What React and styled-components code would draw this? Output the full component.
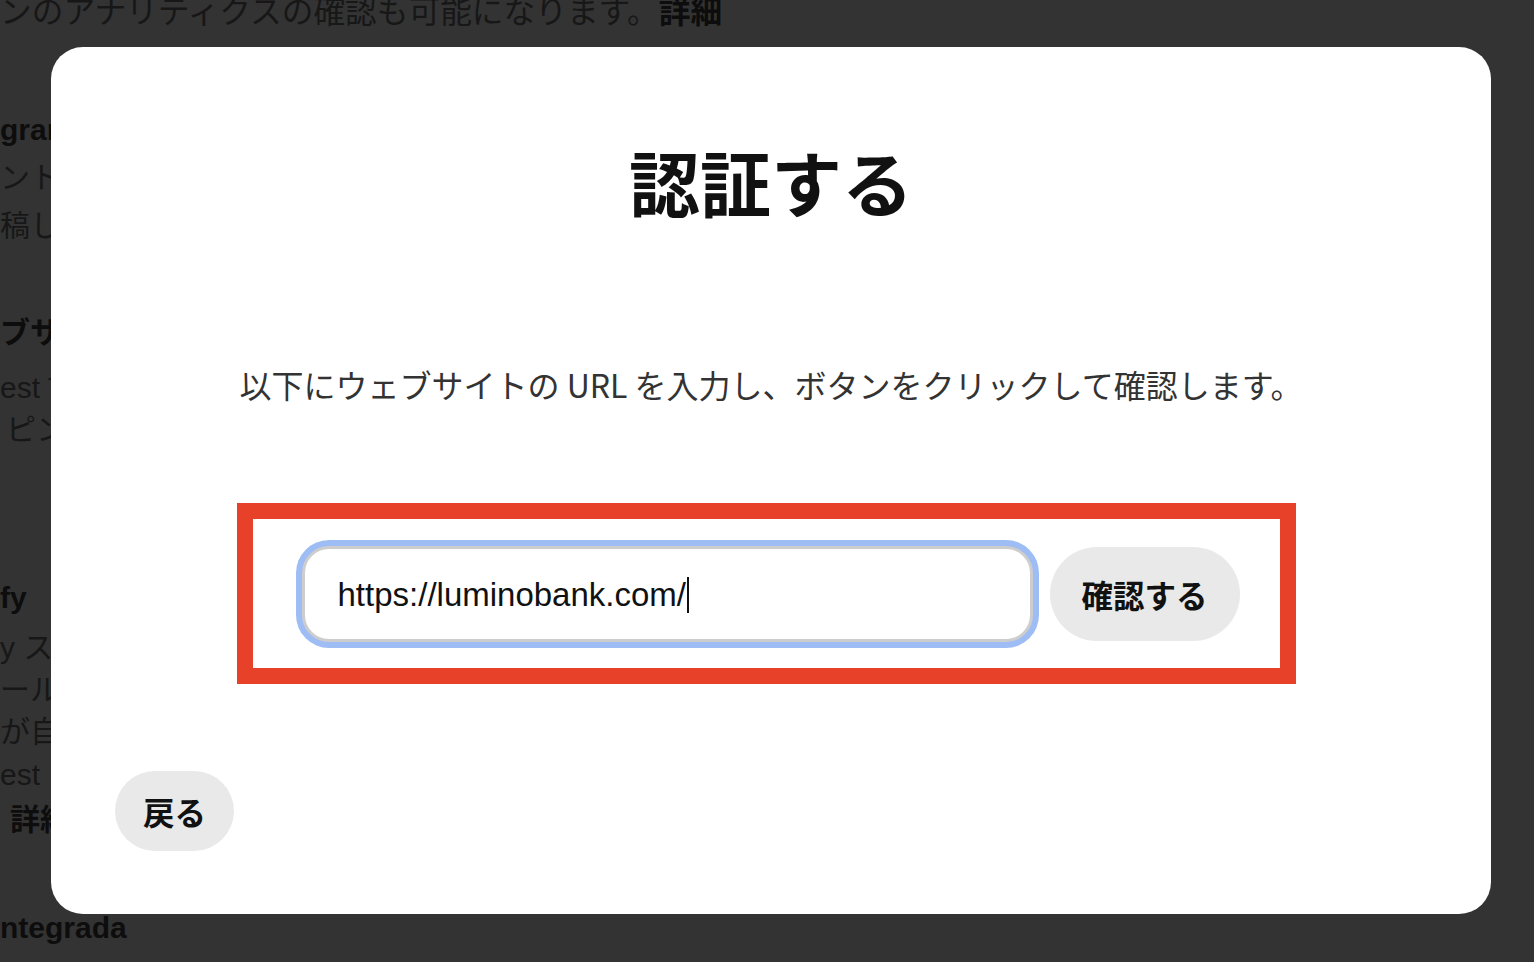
import React from "react";
import styled, { createGlobalStyle } from "styled-components";

const GlobalStyle = createGlobalStyle`
  html, body {
    margin: 0;
    padding: 0;
    background: #333333;
    overflow: hidden;
  }
  body {
    font-family: "Liberation Sans", "Noto Sans CJK JP", sans-serif;
  }
  * { box-sizing: border-box; }
`;

const Page = styled.div`
  width: 1534px;
  height: 962px;
  overflow: hidden;
  display: flex;
  flex-direction: column;
`;

const BgLine = styled.div`
  margin-top: ${(p) => p.$gap}px;
  padding-left: ${(p) => p.$indent || 0}px;
  height: 42px;
  line-height: 42px;
  font-size: ${(p) => p.$size || 30}px;
  white-space: nowrap;
  font-weight: ${(p) => (p.$bold ? 700 : 400)};
  color: ${(p) => (p.$bold ? "#0d0d0d" : "#171717")};
  font-family: "Liberation Sans", "Noto Sans CJK JP", sans-serif;
`;

const Strong = styled.span`
  font-weight: 700;
  color: #0d0d0d;
`;

const Overlay = styled.div`
  position: fixed;
  inset: 0;
  display: flex;
  align-items: flex-start;
  padding: 47px 0 0 51px;
`;

const Modal = styled.div`
  width: 1440px;
  height: 867px;
  background: #ffffff;
  border-radius: 32px;
  display: flex;
  flex-direction: column;
  align-items: center;
  padding-top: 90px;
`;

const Title = styled.h1`
  margin: 0;
  font-family: "Noto Sans CJK JP", sans-serif;
  font-size: 71px;
  line-height: 86px;
  font-weight: 700;
  color: #111111;
`;

const Description = styled.p`
  margin: 139px 0 0;
  font-family: "Noto Sans CJK JP", sans-serif;
  font-size: 32px;
  line-height: 44px;
  font-weight: 400;
  color: #333333;
`;

const Highlight = styled.div`
  margin-top: 97px;
  width: 1059px;
  height: 181px;
  border: 16px solid #e8412a;
  display: flex;
  align-items: center;
  padding-left: 49px;
  gap: 17px;
  transform: translateX(-5px);
`;

const UrlField = styled.div`
  width: 731px;
  height: 96px;
  border: 3px solid #cdcdcd;
  border-radius: 27px;
  box-shadow: 0 0 0 6px #9ebdf5;
  display: flex;
  align-items: center;
  padding-left: 33px;
  padding-top: 3px;
  font-family: "Liberation Sans", sans-serif;
  font-size: 33px;
  color: #111111;
  background: #ffffff;
`;

const Caret = styled.span`
  display: inline-block;
  width: 2px;
  height: 36px;
  background: #111111;
  margin-left: 1px;
`;

const PillButton = styled.button`
  border: none;
  background: #e9e9e9;
  border-radius: 999px;
  height: ${(p) => p.$h}px;
  padding: 0 ${(p) => p.$px}px;
  font-family: "Noto Sans CJK JP", sans-serif;
  font-size: 31.5px;
  font-weight: 700;
  color: #111111;
  cursor: pointer;
  white-space: nowrap;
`;

const Footer = styled.div`
  align-self: stretch;
  margin-top: 87px;
  padding-left: 64px;
  display: flex;
`;

const bgLines = [
  { gap: -9, content: <>ンのアナリティクスの確認も可能になります。<Strong>詳細</Strong></>, size: 31.7 },
  { gap: 76, content: "gram", bold: true },
  { gap: 6, content: "ントを接続すると" },
  { gap: 6, content: "稿したピンの" },
  { gap: 65, content: "ブサイト", bold: true },
  { gap: 13, content: "est Tag" },
  { gap: 0, content: "ピンを", indent: 6 },
  { gap: 126, content: "fy", bold: true },
  { gap: 8, content: "y ストア" },
  { gap: 0, content: "ールを" },
  { gap: 0, content: "が自動" },
  { gap: 1, content: "est タグ" },
  { gap: 3, content: "詳細", bold: true, indent: 10 },
  { gap: 66, content: "ntegrada", bold: true },
];

export default function App() {
  return (
    <>
      <GlobalStyle />
      <Page>
        {bgLines.map((l, i) => (
          <BgLine key={i} $gap={l.gap} $bold={l.bold} $indent={l.indent} $size={l.size}>
            {l.content}
          </BgLine>
        ))}
      </Page>
      <Overlay>
        <Modal role="dialog" aria-modal="true">
          <Title>認証する</Title>
          <Description>
            以下にウェブサイトの URL を入力し、ボタンをクリックして確認します。
          </Description>
          <Highlight>
            <UrlField role="textbox">
              https://luminobank.com/
              <Caret />
            </UrlField>
            <PillButton $h={94} $px={32}>確認する</PillButton>
          </Highlight>
          <Footer>
            <PillButton $h={80} $px={28}>戻る</PillButton>
          </Footer>
        </Modal>
      </Overlay>
    </>
  );
}
